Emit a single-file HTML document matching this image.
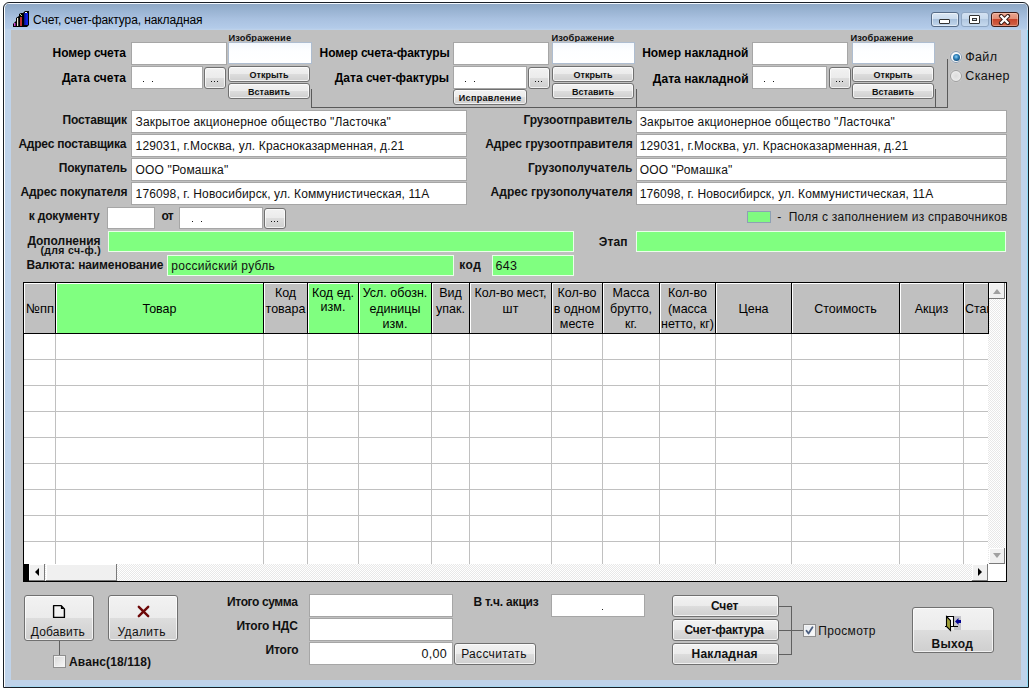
<!DOCTYPE html>
<html><head><meta charset="utf-8"><style>
html,body{margin:0;padding:0;width:1033px;height:690px;overflow:hidden;background:#fff;}
#root{position:relative;width:1033px;height:690px;overflow:hidden;font-family:"Liberation Sans", sans-serif;}
.a{position:absolute;}
.t{position:absolute;white-space:nowrap;font-family:"Liberation Sans", sans-serif;}
</style></head><body><div id="root">
<div class="a" style="left:3px;top:2px;width:1026px;height:686px;box-sizing:border-box;border:1px solid #1a1f26;border-radius:6px 6px 0 0;background:linear-gradient(#f4f9ff 0px,#f4f9ff 1px,#90a9c6 1px,#9ab4d3 8px,#a9c1e0 16px,#b3cbe9 25px,#bfd3ea 27px,#bfd3ea 100%);box-shadow:inset 1px 0 0 #fff, inset -1px 0 0 rgba(255,255,255,0.5);"></div>
<div class="a" style="left:1027px;top:30px;width:1px;height:657px;background:#8fdcf5;"></div>
<div class="a" style="left:11px;top:686px;width:1016px;height:1px;background:#a6d8f0;"></div>
<div class="a" style="left:11px;top:30px;width:1010px;height:650px;background:#c0c0c0;"></div>
<svg class="a" style="left:12px;top:10px" width="18" height="18" viewBox="0 0 18 18"><path d="M11 3 L13 1 L17 1 L17 15 L15 17 L11 17 Z" fill="#000"/><rect x="12" y="3" width="4" height="12" fill="#1020e0"/><rect x="12" y="3" width="1.5" height="12" fill="#0a1490"/><rect x="13" y="2" width="2" height="1" fill="#fff"/><path d="M7 4 L9 3 L11 3 L11 17 L7 17 Z" fill="#000"/><rect x="8" y="7" width="2" height="9" fill="#c03030"/><rect x="8" y="4" width="1" height="1" fill="#c8e890"/><rect x="9" y="5" width="1" height="1" fill="#c8e890"/><path d="M4 8 L7 6 L7 17 L4 17 Z" fill="#000"/><rect x="5" y="8" width="1.2" height="8" fill="#f0e8d8"/><path d="M1 14 L4 11 L4 17 L1 17 Z" fill="#000"/><rect x="2" y="13" width="1.5" height="3" fill="#d040d0"/></svg>
<div class="t" style="top:13px;font-size:12px;line-height:14px;font-weight:normal;color:#000;letter-spacing:-0.107px;left:33.10px;">Счет, счет-фактура, накладная</div>
<div class="a" style="left:931px;top:12px;width:28px;height:15px;box-sizing:border-box;border:1px solid #566b86;border-radius:3px;background:linear-gradient(#dbe7f4 0%,#c9daed 50%,#a9c1dc 50%,#c3d7ec 100%);box-shadow:inset 0 0 0 1px rgba(255,255,255,0.5);"></div>
<div class="a" style="left:939px;top:19px;width:11px;height:5px;box-sizing:border-box;border:1px solid #333;border-radius:1px;background:#fff;"></div>
<div class="a" style="left:961px;top:12px;width:28px;height:15px;box-sizing:border-box;border:1px solid #8fa6c2;border-radius:3px;background:linear-gradient(#d4e2f2 0%,#c5d8ec 50%,#b2c8e1 50%,#c6d9ee 100%);"></div>
<div class="a" style="left:969px;top:15px;width:11px;height:9px;box-sizing:border-box;border:1px solid #333;border-radius:1px;background:#fff;"></div>
<div class="a" style="left:972px;top:18px;width:5px;height:3px;box-sizing:border-box;border:1px solid #333;background:#c8d8ea;"></div>
<div class="a" style="left:991px;top:12px;width:28px;height:15px;box-sizing:border-box;border:1px solid #3b1b17;border-radius:3px;background:linear-gradient(#eaa591 0%,#e08b72 50%,#c9452b 50%,#d0644a 100%);box-shadow:inset 0 0 0 1px rgba(255,220,200,0.4);"></div>
<svg class="a" style="left:998px;top:14px" width="13" height="11" viewBox="0 0 13 11"><path d="M3 2 L10 9 M10 2 L3 9" stroke="#3a1a14" stroke-width="4.2" stroke-linecap="round"/><path d="M3.3 2.3 L9.7 8.7 M9.7 2.3 L3.3 8.7" stroke="#fff" stroke-width="2.3" stroke-linecap="square"/></svg>
<div class="a" style="left:131px;top:42px;width:96px;height:23px;background:#fff;border:1px solid #a6a6a6;box-sizing:border-box;"></div>
<div class="a" style="left:131px;top:66px;width:72px;height:23px;background:#fff;border:1px solid #a6a6a6;box-sizing:border-box;"></div>
<div class="a" style="left:142.75px;top:80.75px;width:1.5px;height:1.5px;background:#000;border-radius:0.3px;"></div>
<div class="a" style="left:151.75px;top:80.75px;width:1.5px;height:1.5px;background:#000;border-radius:0.3px;"></div>
<div class="a" style="left:204px;top:67px;width:22px;height:22px;box-sizing:border-box;border:1px solid #707070;border-radius:3px;background:linear-gradient(#f2f2f2 0%,#ebebeb 50%,#dddddd 50%,#cfcfcf 100%);box-shadow:inset 0 0 0 1px rgba(255,255,255,0.7);"></div>
<div class="a" style="left:210.75px;top:80.75px;width:1.5px;height:1.5px;background:#000;border-radius:0.3px;"></div>
<div class="a" style="left:213.75px;top:80.75px;width:1.5px;height:1.5px;background:#000;border-radius:0.3px;"></div>
<div class="a" style="left:216.75px;top:80.75px;width:1.5px;height:1.5px;background:#000;border-radius:0.3px;"></div>
<div class="t" style="top:33px;font-size:9.3px;line-height:10px;font-weight:bold;color:#111;letter-spacing:0.120px;left:228.40px;">Изображение</div>
<div class="a" style="left:228px;top:42px;width:84px;height:22px;background:linear-gradient(#f4f8fd,#fdfeff 40%,#ffffff);border:1px solid #aebdd0;box-sizing:border-box;"></div>
<div class="a" style="left:228px;top:66px;width:82px;height:16px;box-sizing:border-box;border:1px solid #707070;border-radius:3px;background:linear-gradient(#f2f2f2 0%,#ebebeb 50%,#dddddd 50%,#cfcfcf 100%);box-shadow:inset 0 0 0 1px rgba(255,255,255,0.7);"></div>
<div class="t" style="top:70px;font-size:9px;line-height:10px;font-weight:bold;color:#111;left:228px;width:82px;text-align:center;">Открыть</div>
<div class="a" style="left:228px;top:83px;width:82px;height:16px;box-sizing:border-box;border:1px solid #707070;border-radius:3px;background:linear-gradient(#f2f2f2 0%,#ebebeb 50%,#dddddd 50%,#cfcfcf 100%);box-shadow:inset 0 0 0 1px rgba(255,255,255,0.7);"></div>
<div class="t" style="top:87px;font-size:9px;line-height:10px;font-weight:bold;color:#111;left:228px;width:82px;text-align:center;">Вставить</div>
<div class="a" style="left:453px;top:42px;width:96px;height:23px;background:#fff;border:1px solid #a6a6a6;box-sizing:border-box;"></div>
<div class="a" style="left:453px;top:66px;width:74px;height:23px;background:#fff;border:1px solid #a6a6a6;box-sizing:border-box;"></div>
<div class="a" style="left:464.75px;top:80.75px;width:1.5px;height:1.5px;background:#000;border-radius:0.3px;"></div>
<div class="a" style="left:473.75px;top:80.75px;width:1.5px;height:1.5px;background:#000;border-radius:0.3px;"></div>
<div class="a" style="left:528px;top:67px;width:22px;height:22px;box-sizing:border-box;border:1px solid #707070;border-radius:3px;background:linear-gradient(#f2f2f2 0%,#ebebeb 50%,#dddddd 50%,#cfcfcf 100%);box-shadow:inset 0 0 0 1px rgba(255,255,255,0.7);"></div>
<div class="a" style="left:534.75px;top:80.75px;width:1.5px;height:1.5px;background:#000;border-radius:0.3px;"></div>
<div class="a" style="left:537.75px;top:80.75px;width:1.5px;height:1.5px;background:#000;border-radius:0.3px;"></div>
<div class="a" style="left:540.75px;top:80.75px;width:1.5px;height:1.5px;background:#000;border-radius:0.3px;"></div>
<div class="t" style="top:33px;font-size:9.3px;line-height:10px;font-weight:bold;color:#111;letter-spacing:0.120px;left:551.50px;">Изображение</div>
<div class="a" style="left:552px;top:42px;width:83px;height:22px;background:linear-gradient(#f4f8fd,#fdfeff 40%,#ffffff);border:1px solid #aebdd0;box-sizing:border-box;"></div>
<div class="a" style="left:552px;top:66px;width:82px;height:16px;box-sizing:border-box;border:1px solid #707070;border-radius:3px;background:linear-gradient(#f2f2f2 0%,#ebebeb 50%,#dddddd 50%,#cfcfcf 100%);box-shadow:inset 0 0 0 1px rgba(255,255,255,0.7);"></div>
<div class="t" style="top:70px;font-size:9px;line-height:10px;font-weight:bold;color:#111;left:552px;width:82px;text-align:center;">Открыть</div>
<div class="a" style="left:552px;top:83px;width:82px;height:16px;box-sizing:border-box;border:1px solid #707070;border-radius:3px;background:linear-gradient(#f2f2f2 0%,#ebebeb 50%,#dddddd 50%,#cfcfcf 100%);box-shadow:inset 0 0 0 1px rgba(255,255,255,0.7);"></div>
<div class="t" style="top:87px;font-size:9px;line-height:10px;font-weight:bold;color:#111;left:552px;width:82px;text-align:center;">Вставить</div>
<div class="a" style="left:752px;top:42px;width:96px;height:23px;background:#fff;border:1px solid #a6a6a6;box-sizing:border-box;"></div>
<div class="a" style="left:752px;top:66px;width:75px;height:23px;background:#fff;border:1px solid #a6a6a6;box-sizing:border-box;"></div>
<div class="a" style="left:763.75px;top:80.75px;width:1.5px;height:1.5px;background:#000;border-radius:0.3px;"></div>
<div class="a" style="left:772.75px;top:80.75px;width:1.5px;height:1.5px;background:#000;border-radius:0.3px;"></div>
<div class="a" style="left:829px;top:67px;width:22px;height:22px;box-sizing:border-box;border:1px solid #707070;border-radius:3px;background:linear-gradient(#f2f2f2 0%,#ebebeb 50%,#dddddd 50%,#cfcfcf 100%);box-shadow:inset 0 0 0 1px rgba(255,255,255,0.7);"></div>
<div class="a" style="left:835.75px;top:80.75px;width:1.5px;height:1.5px;background:#000;border-radius:0.3px;"></div>
<div class="a" style="left:838.75px;top:80.75px;width:1.5px;height:1.5px;background:#000;border-radius:0.3px;"></div>
<div class="a" style="left:841.75px;top:80.75px;width:1.5px;height:1.5px;background:#000;border-radius:0.3px;"></div>
<div class="t" style="top:33px;font-size:9.3px;line-height:10px;font-weight:bold;color:#111;letter-spacing:0.120px;left:850.50px;">Изображение</div>
<div class="a" style="left:852px;top:42px;width:83px;height:22px;background:linear-gradient(#f4f8fd,#fdfeff 40%,#ffffff);border:1px solid #aebdd0;box-sizing:border-box;"></div>
<div class="a" style="left:852px;top:66px;width:82px;height:16px;box-sizing:border-box;border:1px solid #707070;border-radius:3px;background:linear-gradient(#f2f2f2 0%,#ebebeb 50%,#dddddd 50%,#cfcfcf 100%);box-shadow:inset 0 0 0 1px rgba(255,255,255,0.7);"></div>
<div class="t" style="top:70px;font-size:9px;line-height:10px;font-weight:bold;color:#111;left:852px;width:82px;text-align:center;">Открыть</div>
<div class="a" style="left:852px;top:83px;width:82px;height:16px;box-sizing:border-box;border:1px solid #707070;border-radius:3px;background:linear-gradient(#f2f2f2 0%,#ebebeb 50%,#dddddd 50%,#cfcfcf 100%);box-shadow:inset 0 0 0 1px rgba(255,255,255,0.7);"></div>
<div class="t" style="top:87px;font-size:9px;line-height:10px;font-weight:bold;color:#111;left:852px;width:82px;text-align:center;">Вставить</div>
<div class="t" style="top:46px;font-size:12px;line-height:14px;font-weight:bold;color:#000;letter-spacing:-0.110px;left:52.60px;">Номер счета</div>
<div class="t" style="top:71px;font-size:12px;line-height:14px;font-weight:bold;color:#000;letter-spacing:0.056px;left:62.00px;">Дата счета</div>
<div class="t" style="top:46px;font-size:12px;line-height:14px;font-weight:bold;color:#000;letter-spacing:-0.100px;left:319.60px;">Номер счета-фактуры</div>
<div class="t" style="top:71px;font-size:12px;line-height:14px;font-weight:bold;color:#000;letter-spacing:-0.000px;left:334.80px;">Дата счет-фактуры</div>
<div class="t" style="top:46px;font-size:12px;line-height:14px;font-weight:bold;color:#000;letter-spacing:0.021px;left:642.20px;">Номер накладной</div>
<div class="t" style="top:72px;font-size:12px;line-height:14px;font-weight:bold;color:#000;letter-spacing:0.054px;left:652.80px;">Дата накладной</div>
<div class="a" style="left:453px;top:89px;width:74px;height:16px;box-sizing:border-box;border:1px solid #707070;border-radius:3px;background:linear-gradient(#f2f2f2 0%,#ebebeb 50%,#dddddd 50%,#cfcfcf 100%);box-shadow:inset 0 0 0 1px rgba(255,255,255,0.7);"></div>
<div class="t" style="top:93px;font-size:9px;line-height:10px;font-weight:bold;color:#111;letter-spacing:0.310px;left:458.80px;">Исправление</div>
<div class="a" style="left:311px;top:89px;width:1px;height:18px;background:#5a5a5a;"></div>
<div class="a" style="left:636px;top:89px;width:1px;height:18px;background:#5a5a5a;"></div>
<div class="a" style="left:935px;top:89px;width:1px;height:18px;background:#5a5a5a;"></div>
<div class="a" style="left:311px;top:107px;width:637px;height:1px;background:#5a5a5a;"></div>
<div class="a" style="left:947px;top:59px;width:1px;height:49px;background:#5a5a5a;"></div>
<div class="a" style="left:950px;top:51px;width:12px;height:12px;box-sizing:border-box;border-radius:50%;border:1px solid #8496aa;background:#f6f8fa;box-shadow:0 0 1px rgba(255,255,255,0.8);"></div>
<div class="a" style="left:952.5px;top:53.5px;width:7px;height:7px;border-radius:50%;background:radial-gradient(circle at 45% 40%, #8fd0f8 0%, #2b7fb8 40%, #0f4470 80%, #1a3a5a 100%);"></div>
<div class="a" style="left:950px;top:70px;width:12px;height:12px;box-sizing:border-box;border-radius:50%;border:1px solid #a0a0a0;background:radial-gradient(circle at 50% 50%, #dcdcdc 0%, #e6e6e6 50%, #fafafa 100%);box-shadow:0 0 1px rgba(255,255,255,0.8);"></div>
<div class="t" style="top:50px;font-size:12.5px;line-height:14px;font-weight:normal;color:#111;letter-spacing:0.300px;left:965.30px;">Файл</div>
<div class="t" style="top:69px;font-size:12.5px;line-height:14px;font-weight:normal;color:#111;letter-spacing:0.340px;left:965.30px;">Сканер</div>
<div class="a" style="left:131px;top:110px;width:336px;height:23px;background:#fff;border:1px solid #a6a6a6;box-sizing:border-box;"></div>
<div class="a" style="left:636px;top:110px;width:371px;height:23px;background:#fff;border:1px solid #a6a6a6;box-sizing:border-box;"></div>
<div class="t" style="top:113px;font-size:12px;line-height:14px;font-weight:bold;color:#111;letter-spacing:-0.188px;left:62.60px;">Поставщик</div>
<div class="t" style="top:113px;font-size:12px;line-height:14px;font-weight:bold;color:#111;letter-spacing:-0.040px;left:523.40px;">Грузоотправитель</div>
<div class="t" style="top:115px;font-size:12px;line-height:14px;font-weight:normal;color:#111;letter-spacing:0.159px;left:135.60px;">Закрытое акционерное общество "Ласточка"</div>
<div class="t" style="top:115px;font-size:12px;line-height:14px;font-weight:normal;color:#111;letter-spacing:0.156px;left:639.70px;">Закрытое акционерное общество "Ласточка"</div>
<div class="a" style="left:131px;top:134px;width:336px;height:23px;background:#fff;border:1px solid #a6a6a6;box-sizing:border-box;"></div>
<div class="a" style="left:636px;top:134px;width:371px;height:23px;background:#fff;border:1px solid #a6a6a6;box-sizing:border-box;"></div>
<div class="t" style="top:137px;font-size:12px;line-height:14px;font-weight:bold;color:#111;letter-spacing:-0.220px;left:18.40px;">Адрес поставщика</div>
<div class="t" style="top:137px;font-size:12px;line-height:14px;font-weight:bold;color:#111;letter-spacing:-0.019px;left:485.20px;">Адрес грузоотправителя</div>
<div class="t" style="top:139px;font-size:12px;line-height:14px;font-weight:normal;color:#111;letter-spacing:0.145px;left:135.60px;">129031, г.Москва, ул. Красноказарменная, д.21</div>
<div class="t" style="top:139px;font-size:12px;line-height:14px;font-weight:normal;color:#111;letter-spacing:0.143px;left:639.70px;">129031, г.Москва, ул. Красноказарменная, д.21</div>
<div class="a" style="left:131px;top:158px;width:336px;height:23px;background:#fff;border:1px solid #a6a6a6;box-sizing:border-box;"></div>
<div class="a" style="left:636px;top:158px;width:371px;height:23px;background:#fff;border:1px solid #a6a6a6;box-sizing:border-box;"></div>
<div class="t" style="top:161px;font-size:12px;line-height:14px;font-weight:bold;color:#111;letter-spacing:-0.178px;left:58.70px;">Покупатель</div>
<div class="t" style="top:161px;font-size:12px;line-height:14px;font-weight:bold;color:#111;letter-spacing:0.129px;left:528.00px;">Грузополучатель</div>
<div class="t" style="top:163px;font-size:12px;line-height:14px;font-weight:normal;color:#111;letter-spacing:0.150px;left:135.60px;">ООО "Ромашка"</div>
<div class="t" style="top:163px;font-size:12px;line-height:14px;font-weight:normal;color:#111;letter-spacing:0.150px;left:639.70px;">ООО "Ромашка"</div>
<div class="a" style="left:131px;top:182px;width:336px;height:23px;background:#fff;border:1px solid #a6a6a6;box-sizing:border-box;"></div>
<div class="a" style="left:636px;top:182px;width:371px;height:23px;background:#fff;border:1px solid #a6a6a6;box-sizing:border-box;"></div>
<div class="t" style="top:185px;font-size:12px;line-height:14px;font-weight:bold;color:#111;letter-spacing:-0.093px;left:20.50px;">Адрес покупателя</div>
<div class="t" style="top:185px;font-size:12px;line-height:14px;font-weight:bold;color:#111;letter-spacing:0.065px;left:490.50px;">Адрес грузополучателя</div>
<div class="t" style="top:187px;font-size:12px;line-height:14px;font-weight:normal;color:#111;letter-spacing:0.129px;left:135.60px;">176098, г. Новосибирск, ул. Коммунистическая, 11А</div>
<div class="t" style="top:187px;font-size:12px;line-height:14px;font-weight:normal;color:#111;letter-spacing:0.127px;left:639.70px;">176098, г. Новосибирск, ул. Коммунистическая, 11А</div>
<div class="t" style="top:209px;font-size:12px;line-height:14px;font-weight:bold;color:#111;letter-spacing:-0.150px;left:28.70px;">к документу</div>
<div class="a" style="left:107px;top:207px;width:48px;height:22px;background:#fff;border:1px solid #a6a6a6;box-sizing:border-box;"></div>
<div class="t" style="top:209px;font-size:12px;line-height:14px;font-weight:bold;color:#111;letter-spacing:-0.800px;left:161.60px;">от</div>
<div class="a" style="left:179px;top:207px;width:84px;height:22px;background:#fff;border:1px solid #a6a6a6;box-sizing:border-box;"></div>
<div class="a" style="left:191.75px;top:220.75px;width:1.5px;height:1.5px;background:#000;border-radius:0.3px;"></div>
<div class="a" style="left:200.75px;top:220.75px;width:1.5px;height:1.5px;background:#000;border-radius:0.3px;"></div>
<div class="a" style="left:264px;top:208px;width:22px;height:21px;box-sizing:border-box;border:1px solid #707070;border-radius:3px;background:linear-gradient(#f2f2f2 0%,#ebebeb 50%,#dddddd 50%,#cfcfcf 100%);box-shadow:inset 0 0 0 1px rgba(255,255,255,0.7);"></div>
<div class="a" style="left:270.75px;top:220.75px;width:1.5px;height:1.5px;background:#000;border-radius:0.3px;"></div>
<div class="a" style="left:273.75px;top:220.75px;width:1.5px;height:1.5px;background:#000;border-radius:0.3px;"></div>
<div class="a" style="left:276.75px;top:220.75px;width:1.5px;height:1.5px;background:#000;border-radius:0.3px;"></div>
<div class="a" style="left:747px;top:211px;width:24px;height:12px;box-sizing:border-box;border:1px solid #8ea0b4;background:#80fa80;"></div>
<div class="t" style="top:210px;font-size:12px;line-height:14px;font-weight:normal;color:#111;letter-spacing:0.256px;left:777.30px;">-&nbsp;&nbsp;Поля с заполнением из справочников</div>
<div class="t" style="top:234px;font-size:12px;line-height:14px;font-weight:bold;color:#111;letter-spacing:-0.033px;left:27.40px;">Дополнения</div>
<div class="t" style="top:244px;font-size:10.5px;line-height:12px;font-weight:bold;color:#111;letter-spacing:0.370px;left:40.40px;">(для сч-ф.)</div>
<div class="a" style="left:108px;top:231px;width:466px;height:21px;background:#80ff80;border:1px solid #eaffea;box-sizing:border-box;"></div>
<div class="t" style="top:235px;font-size:12px;line-height:14px;font-weight:bold;color:#111;letter-spacing:0.167px;left:598.70px;">Этап</div>
<div class="a" style="left:636px;top:231px;width:370px;height:21px;background:#80ff80;border:1px solid #eaffea;box-sizing:border-box;"></div>
<div class="t" style="top:258px;font-size:12px;line-height:14px;font-weight:bold;color:#111;letter-spacing:-0.126px;left:26.40px;">Валюта: наименование</div>
<div class="a" style="left:167px;top:255px;width:287px;height:21px;background:#80ff80;border:1px solid #eaffea;box-sizing:border-box;"></div>
<div class="t" style="top:259px;font-size:12px;line-height:14px;font-weight:normal;color:#111;letter-spacing:0.300px;left:171.30px;">российский рубль</div>
<div class="t" style="top:258px;font-size:12px;line-height:14px;font-weight:bold;color:#111;letter-spacing:0.550px;left:459.20px;">код</div>
<div class="a" style="left:492px;top:255px;width:82px;height:21px;background:#80ff80;border:1px solid #eaffea;box-sizing:border-box;"></div>
<div class="t" style="top:259px;font-size:12.5px;line-height:14px;font-weight:normal;color:#111;letter-spacing:0.300px;left:495.40px;">643</div>
<div class="a" style="left:23px;top:282px;width:984px;height:300px;background:#fff;box-sizing:border-box;border:1px solid #000;"></div>
<div class="a" style="left:24px;top:283px;width:31px;height:50px;background:#c0c0c0;box-shadow:inset 1px 1px 0 #fff;"></div>
<div class="a" style="left:56px;top:283px;width:207px;height:50px;background:#80ff80;box-shadow:inset 1px 1px 0 #fff;"></div>
<div class="a" style="left:264px;top:283px;width:43px;height:50px;background:#c0c0c0;box-shadow:inset 1px 1px 0 #fff;"></div>
<div class="a" style="left:308px;top:283px;width:50px;height:50px;background:#80ff80;box-shadow:inset 1px 1px 0 #fff;"></div>
<div class="a" style="left:359px;top:283px;width:72px;height:50px;background:#80ff80;box-shadow:inset 1px 1px 0 #fff;"></div>
<div class="a" style="left:432px;top:283px;width:37px;height:50px;background:#c0c0c0;box-shadow:inset 1px 1px 0 #fff;"></div>
<div class="a" style="left:470px;top:283px;width:81px;height:50px;background:#c0c0c0;box-shadow:inset 1px 1px 0 #fff;"></div>
<div class="a" style="left:552px;top:283px;width:50px;height:50px;background:#c0c0c0;box-shadow:inset 1px 1px 0 #fff;"></div>
<div class="a" style="left:603px;top:283px;width:56px;height:50px;background:#c0c0c0;box-shadow:inset 1px 1px 0 #fff;"></div>
<div class="a" style="left:660px;top:283px;width:55px;height:50px;background:#c0c0c0;box-shadow:inset 1px 1px 0 #fff;"></div>
<div class="a" style="left:716px;top:283px;width:75px;height:50px;background:#c0c0c0;box-shadow:inset 1px 1px 0 #fff;"></div>
<div class="a" style="left:792px;top:283px;width:107px;height:50px;background:#c0c0c0;box-shadow:inset 1px 1px 0 #fff;"></div>
<div class="a" style="left:900px;top:283px;width:63px;height:50px;background:#c0c0c0;box-shadow:inset 1px 1px 0 #fff;"></div>
<div class="a" style="left:964px;top:283px;width:24px;height:50px;background:#c0c0c0;box-shadow:inset 1px 1px 0 #fff;"></div>
<div class="a" style="left:55px;top:283px;width:1px;height:50px;background:#000;"></div>
<div class="a" style="left:263px;top:283px;width:1px;height:50px;background:#000;"></div>
<div class="a" style="left:307px;top:283px;width:1px;height:50px;background:#000;"></div>
<div class="a" style="left:358px;top:283px;width:1px;height:50px;background:#000;"></div>
<div class="a" style="left:431px;top:283px;width:1px;height:50px;background:#000;"></div>
<div class="a" style="left:469px;top:283px;width:1px;height:50px;background:#000;"></div>
<div class="a" style="left:551px;top:283px;width:1px;height:50px;background:#000;"></div>
<div class="a" style="left:602px;top:283px;width:1px;height:50px;background:#000;"></div>
<div class="a" style="left:659px;top:283px;width:1px;height:50px;background:#000;"></div>
<div class="a" style="left:715px;top:283px;width:1px;height:50px;background:#000;"></div>
<div class="a" style="left:791px;top:283px;width:1px;height:50px;background:#000;"></div>
<div class="a" style="left:899px;top:283px;width:1px;height:50px;background:#000;"></div>
<div class="a" style="left:963px;top:283px;width:1px;height:50px;background:#000;"></div>
<div class="a" style="left:988px;top:283px;width:1px;height:50px;background:#000;"></div>
<div class="a" style="left:24px;top:333px;width:965px;height:1px;background:#000;"></div>
<div class="a" style="left:55px;top:334px;width:1px;height:230px;background:#c0c0c0;"></div>
<div class="a" style="left:263px;top:334px;width:1px;height:230px;background:#c0c0c0;"></div>
<div class="a" style="left:307px;top:334px;width:1px;height:230px;background:#c0c0c0;"></div>
<div class="a" style="left:358px;top:334px;width:1px;height:230px;background:#c0c0c0;"></div>
<div class="a" style="left:431px;top:334px;width:1px;height:230px;background:#c0c0c0;"></div>
<div class="a" style="left:469px;top:334px;width:1px;height:230px;background:#c0c0c0;"></div>
<div class="a" style="left:551px;top:334px;width:1px;height:230px;background:#c0c0c0;"></div>
<div class="a" style="left:602px;top:334px;width:1px;height:230px;background:#c0c0c0;"></div>
<div class="a" style="left:659px;top:334px;width:1px;height:230px;background:#c0c0c0;"></div>
<div class="a" style="left:715px;top:334px;width:1px;height:230px;background:#c0c0c0;"></div>
<div class="a" style="left:791px;top:334px;width:1px;height:230px;background:#c0c0c0;"></div>
<div class="a" style="left:899px;top:334px;width:1px;height:230px;background:#c0c0c0;"></div>
<div class="a" style="left:963px;top:334px;width:1px;height:230px;background:#c0c0c0;"></div>
<div class="a" style="left:24px;top:359px;width:964px;height:1px;background:#c0c0c0;"></div>
<div class="a" style="left:24px;top:385px;width:964px;height:1px;background:#c0c0c0;"></div>
<div class="a" style="left:24px;top:411px;width:964px;height:1px;background:#c0c0c0;"></div>
<div class="a" style="left:24px;top:437px;width:964px;height:1px;background:#c0c0c0;"></div>
<div class="a" style="left:24px;top:463px;width:964px;height:1px;background:#c0c0c0;"></div>
<div class="a" style="left:24px;top:489px;width:964px;height:1px;background:#c0c0c0;"></div>
<div class="a" style="left:24px;top:515px;width:964px;height:1px;background:#c0c0c0;"></div>
<div class="a" style="left:24px;top:541px;width:964px;height:1px;background:#c0c0c0;"></div>
<div class="t" style="top:301px;font-size:13.5px;line-height:15px;font-weight:normal;color:#000;left:25.60px;transform:scaleX(0.96);transform-origin:left 0;">№пп</div>
<div class="t" style="top:301px;font-size:13.5px;line-height:15px;font-weight:normal;color:#000;left:36px;width:247px;text-align:center;transform:scaleX(0.925);transform-origin:center 0;white-space:nowrap;">Товар</div>
<div class="t" style="top:285px;font-size:13.5px;line-height:15px;font-weight:normal;color:#000;left:244px;width:83px;text-align:center;transform:scaleX(0.925);transform-origin:center 0;white-space:nowrap;">Код</div>
<div class="t" style="top:301px;font-size:13.5px;line-height:15px;font-weight:normal;color:#000;left:244px;width:83px;text-align:center;transform:scaleX(0.925);transform-origin:center 0;white-space:nowrap;">товара</div>
<div class="t" style="top:285px;font-size:13.5px;line-height:15px;font-weight:normal;color:#000;left:288px;width:90px;text-align:center;transform:scaleX(0.925);transform-origin:center 0;white-space:nowrap;">Код ед.</div>
<div class="t" style="top:299px;font-size:13.5px;line-height:15px;font-weight:normal;color:#000;left:288px;width:90px;text-align:center;transform:scaleX(0.925);transform-origin:center 0;white-space:nowrap;">изм.</div>
<div class="t" style="top:285px;font-size:13.5px;line-height:15px;font-weight:normal;color:#000;left:339px;width:112px;text-align:center;transform:scaleX(0.925);transform-origin:center 0;white-space:nowrap;">Усл. обозн.</div>
<div class="t" style="top:301px;font-size:13.5px;line-height:15px;font-weight:normal;color:#000;left:339px;width:112px;text-align:center;transform:scaleX(0.925);transform-origin:center 0;white-space:nowrap;">единицы</div>
<div class="t" style="top:316px;font-size:13.5px;line-height:15px;font-weight:normal;color:#000;left:339px;width:112px;text-align:center;transform:scaleX(0.925);transform-origin:center 0;white-space:nowrap;">изм.</div>
<div class="t" style="top:285px;font-size:13.5px;line-height:15px;font-weight:normal;color:#000;left:412px;width:77px;text-align:center;transform:scaleX(0.925);transform-origin:center 0;white-space:nowrap;">Вид</div>
<div class="t" style="top:301px;font-size:13.5px;line-height:15px;font-weight:normal;color:#000;left:412px;width:77px;text-align:center;transform:scaleX(0.925);transform-origin:center 0;white-space:nowrap;">упак.</div>
<div class="t" style="top:285px;font-size:13.5px;line-height:15px;font-weight:normal;color:#000;left:450px;width:121px;text-align:center;transform:scaleX(0.925);transform-origin:center 0;white-space:nowrap;">Кол-во мест,</div>
<div class="t" style="top:301px;font-size:13.5px;line-height:15px;font-weight:normal;color:#000;left:450px;width:121px;text-align:center;transform:scaleX(0.925);transform-origin:center 0;white-space:nowrap;">шт</div>
<div class="t" style="top:285px;font-size:13.5px;line-height:15px;font-weight:normal;color:#000;left:532px;width:90px;text-align:center;transform:scaleX(0.925);transform-origin:center 0;white-space:nowrap;">Кол-во</div>
<div class="t" style="top:301px;font-size:13.5px;line-height:15px;font-weight:normal;color:#000;left:532px;width:90px;text-align:center;transform:scaleX(0.925);transform-origin:center 0;white-space:nowrap;">в одном</div>
<div class="t" style="top:316px;font-size:13.5px;line-height:15px;font-weight:normal;color:#000;left:532px;width:90px;text-align:center;transform:scaleX(0.925);transform-origin:center 0;white-space:nowrap;">месте</div>
<div class="t" style="top:285px;font-size:13.5px;line-height:15px;font-weight:normal;color:#000;left:583px;width:96px;text-align:center;transform:scaleX(0.925);transform-origin:center 0;white-space:nowrap;">Масса</div>
<div class="t" style="top:301px;font-size:13.5px;line-height:15px;font-weight:normal;color:#000;left:583px;width:96px;text-align:center;transform:scaleX(0.925);transform-origin:center 0;white-space:nowrap;">брутто,</div>
<div class="t" style="top:316px;font-size:13.5px;line-height:15px;font-weight:normal;color:#000;left:583px;width:96px;text-align:center;transform:scaleX(0.925);transform-origin:center 0;white-space:nowrap;">кг.</div>
<div class="t" style="top:285px;font-size:13.5px;line-height:15px;font-weight:normal;color:#000;left:640px;width:95px;text-align:center;transform:scaleX(0.925);transform-origin:center 0;white-space:nowrap;">Кол-во</div>
<div class="t" style="top:301px;font-size:13.5px;line-height:15px;font-weight:normal;color:#000;left:640px;width:95px;text-align:center;transform:scaleX(0.925);transform-origin:center 0;white-space:nowrap;">(масса</div>
<div class="t" style="top:316px;font-size:13.5px;line-height:15px;font-weight:normal;color:#000;left:640px;width:95px;text-align:center;transform:scaleX(0.925);transform-origin:center 0;white-space:nowrap;">нетто, кг)</div>
<div class="t" style="top:301px;font-size:13.5px;line-height:15px;font-weight:normal;color:#000;left:696px;width:115px;text-align:center;transform:scaleX(0.925);transform-origin:center 0;white-space:nowrap;">Цена</div>
<div class="t" style="top:301px;font-size:13.5px;line-height:15px;font-weight:normal;color:#000;left:772px;width:147px;text-align:center;transform:scaleX(0.925);transform-origin:center 0;white-space:nowrap;">Стоимость</div>
<div class="t" style="top:301px;font-size:13.5px;line-height:15px;font-weight:normal;color:#000;left:880px;width:103px;text-align:center;transform:scaleX(0.925);transform-origin:center 0;white-space:nowrap;">Акциз</div>
<div class="a" style="left:964px;top:283px;width:24px;height:50px;overflow:hidden;">
<div class="t" style="top:18px;font-size:13.5px;line-height:15px;font-weight:normal;color:#000;left:0.50px;transform:scaleX(0.925);transform-origin:left 0;">Ставка</div>
</div>
<div class="a" style="left:988px;top:283px;width:17px;height:281px;background-color:#fff;background-image:linear-gradient(45deg,#e8e8e8 25%,transparent 25%,transparent 75%,#e8e8e8 75%),linear-gradient(45deg,#e8e8e8 25%,transparent 25%,transparent 75%,#e8e8e8 75%);background-size:2px 2px;background-position:0 0,1px 1px;"></div>
<div class="a" style="left:988px;top:283px;width:1px;height:51px;background:#000;"></div>
<div class="a" style="left:989px;top:283px;width:16px;height:16px;box-sizing:border-box;background:#f0f0f0;border-right:1px solid #7a7a7a;border-bottom:1px solid #7a7a7a;box-shadow:inset 1px 1px 0 #fff;"></div>
<svg class="a" style="left:989px;top:283px" width="16" height="16"><path d="M4 11 L12 11 L8 6 Z" fill="#a0a0a0"/></svg>
<div class="a" style="left:989px;top:548px;width:16px;height:16px;box-sizing:border-box;background:#f0f0f0;border-right:1px solid #7a7a7a;border-bottom:1px solid #7a7a7a;box-shadow:inset 1px 1px 0 #fff;"></div>
<svg class="a" style="left:989px;top:548px" width="16" height="16"><path d="M4 5 L12 5 L8 10 Z" fill="#a0a0a0"/></svg>
<div class="a" style="left:24px;top:564px;width:964px;height:17px;background-color:#fff;background-image:linear-gradient(45deg,#e8e8e8 25%,transparent 25%,transparent 75%,#e8e8e8 75%),linear-gradient(45deg,#e8e8e8 25%,transparent 25%,transparent 75%,#e8e8e8 75%);background-size:2px 2px;background-position:0 0,1px 1px;"></div>
<div class="a" style="left:24px;top:564px;width:5px;height:17px;background:#000;"></div>
<div class="a" style="left:29px;top:564px;width:16px;height:17px;box-sizing:border-box;background:#f0f0f0;border-right:1px solid #7a7a7a;border-bottom:1px solid #7a7a7a;box-shadow:inset 1px 1px 0 #fff;"></div>
<svg class="a" style="left:29px;top:564px" width="16" height="17"><path d="M10 4 L10 12 L6 8 Z" fill="#000"/></svg>
<div class="a" style="left:46px;top:564px;width:71px;height:17px;box-sizing:border-box;background:#f0f0f0;border-right:1px solid #7a7a7a;border-bottom:1px solid #7a7a7a;box-shadow:inset 1px 1px 0 #fff;"></div>
<div class="a" style="left:972px;top:564px;width:16px;height:17px;box-sizing:border-box;background:#f0f0f0;border-right:1px solid #7a7a7a;border-bottom:1px solid #7a7a7a;box-shadow:inset 1px 1px 0 #fff;"></div>
<svg class="a" style="left:972px;top:564px" width="16" height="17"><path d="M6 4 L6 12 L10 8 Z" fill="#000"/></svg>
<div class="a" style="left:988px;top:564px;width:17px;height:17px;background:#fff;"></div>
<div class="a" style="left:24px;top:595px;width:70px;height:46px;box-sizing:border-box;border:1px solid #707070;border-radius:3px;background:linear-gradient(#f2f2f2 0%,#ebebeb 50%,#dddddd 50%,#cfcfcf 100%);box-shadow:inset 0 0 0 1px rgba(255,255,255,0.7);"></div>
<svg class="a" style="left:52px;top:604px" width="14" height="15" viewBox="0 0 14 15"><path d="M1.6 1.6 L9 1.6 L12.4 5 L12.4 13.4 L1.6 13.4 Z" fill="#f2f2f2" stroke="#000" stroke-width="1.4" stroke-linejoin="round"/><path d="M9.5 2 L9.5 4.5 L12 4.5" fill="none" stroke="#000" stroke-width="1.2"/></svg>
<div class="t" style="top:625px;font-size:12px;line-height:14px;font-weight:normal;color:#111;letter-spacing:0.143px;left:30.80px;">Добавить</div>
<div class="a" style="left:108px;top:595px;width:70px;height:46px;box-sizing:border-box;border:1px solid #707070;border-radius:3px;background:linear-gradient(#f2f2f2 0%,#ebebeb 50%,#dddddd 50%,#cfcfcf 100%);box-shadow:inset 0 0 0 1px rgba(255,255,255,0.7);"></div>
<svg class="a" style="left:137px;top:605px" width="13" height="13" viewBox="0 0 13 13"><path d="M1.8 1.8 L11.2 11.2 M11.2 1.8 L1.8 11.2" stroke="#6e0808" stroke-width="2.4" stroke-linecap="round"/></svg>
<div class="t" style="top:625px;font-size:12px;line-height:14px;font-weight:normal;color:#111;letter-spacing:0.350px;left:117.50px;">Удалить</div>
<div class="a" style="left:59px;top:641px;width:1px;height:14px;background:#606060;"></div>
<div class="a" style="left:53px;top:655px;width:13px;height:13px;box-sizing:border-box;border:1px solid #8f8f8f;background:linear-gradient(135deg,#d8d8d8,#f8f8f8);box-shadow:inset 0 0 0 1px #f4f4f4;"></div>
<div class="t" style="top:655px;font-size:12px;line-height:14px;font-weight:bold;color:#111;letter-spacing:0.125px;left:69.00px;">Аванс(18/118)</div>
<div class="t" style="top:595px;font-size:12px;line-height:14px;font-weight:bold;color:#111;letter-spacing:-0.390px;left:227.10px;">Итого сумма</div>
<div class="t" style="top:619px;font-size:12px;line-height:14px;font-weight:bold;color:#111;letter-spacing:-0.200px;left:236.40px;">Итого НДС</div>
<div class="t" style="top:643px;font-size:12px;line-height:14px;font-weight:bold;color:#111;letter-spacing:-0.175px;left:265.50px;">Итого</div>
<div class="a" style="left:309px;top:594px;width:144px;height:23px;background:#fff;border:1px solid #a6a6a6;box-sizing:border-box;"></div>
<div class="a" style="left:309px;top:618px;width:144px;height:23px;background:#fff;border:1px solid #a6a6a6;box-sizing:border-box;"></div>
<div class="a" style="left:309px;top:642px;width:144px;height:23px;background:#fff;border:1px solid #a6a6a6;box-sizing:border-box;"></div>
<div class="t" style="top:647px;font-size:12.5px;line-height:14px;font-weight:normal;color:#111;letter-spacing:0.300px;left:421.60px;">0,00</div>
<div class="a" style="left:454px;top:643px;width:82px;height:22px;box-sizing:border-box;border:1px solid #707070;border-radius:3px;background:linear-gradient(#f2f2f2 0%,#ebebeb 50%,#dddddd 50%,#cfcfcf 100%);box-shadow:inset 0 0 0 1px rgba(255,255,255,0.7);"></div>
<div class="t" style="top:647px;font-size:12px;line-height:14px;font-weight:normal;color:#111;letter-spacing:0.311px;left:461.20px;">Рассчитать</div>
<div class="t" style="top:595px;font-size:12px;line-height:14px;font-weight:bold;color:#111;letter-spacing:-0.164px;left:473.40px;">В т.ч. акциз</div>
<div class="a" style="left:551px;top:594px;width:94px;height:23px;background:#fff;border:1px solid #a6a6a6;box-sizing:border-box;"></div>
<div class="a" style="left:602px;top:609px;width:1px;height:1px;background:#222;box-shadow:0 0 0.6px #222;"></div>
<div class="a" style="left:672px;top:595px;width:107px;height:22px;box-sizing:border-box;border:1px solid #707070;border-radius:3px;background:linear-gradient(#f2f2f2 0%,#ebebeb 50%,#dddddd 50%,#cfcfcf 100%);box-shadow:inset 0 0 0 1px rgba(255,255,255,0.7);"></div>
<div class="t" style="top:599px;font-size:12px;line-height:14px;font-weight:bold;color:#111;letter-spacing:-0.133px;left:711.00px;">Счет</div>
<div class="a" style="left:672px;top:619px;width:107px;height:22px;box-sizing:border-box;border:1px solid #707070;border-radius:3px;background:linear-gradient(#f2f2f2 0%,#ebebeb 50%,#dddddd 50%,#cfcfcf 100%);box-shadow:inset 0 0 0 1px rgba(255,255,255,0.7);"></div>
<div class="t" style="top:623px;font-size:12px;line-height:14px;font-weight:bold;color:#111;letter-spacing:-0.200px;left:684.40px;">Счет-фактура</div>
<div class="a" style="left:672px;top:643px;width:107px;height:22px;box-sizing:border-box;border:1px solid #707070;border-radius:3px;background:linear-gradient(#f2f2f2 0%,#ebebeb 50%,#dddddd 50%,#cfcfcf 100%);box-shadow:inset 0 0 0 1px rgba(255,255,255,0.7);"></div>
<div class="t" style="top:647px;font-size:12px;line-height:14px;font-weight:bold;color:#111;letter-spacing:0.212px;left:691.50px;">Накладная</div>
<div class="a" style="left:779px;top:606px;width:13px;height:1px;background:#606060;"></div>
<div class="a" style="left:791px;top:606px;width:1px;height:49px;background:#606060;"></div>
<div class="a" style="left:779px;top:654px;width:13px;height:1px;background:#606060;"></div>
<div class="a" style="left:779px;top:630px;width:25px;height:1px;background:#606060;"></div>
<div class="a" style="left:803px;top:624px;width:13px;height:13px;box-sizing:border-box;border:1px solid #8f8f8f;background:linear-gradient(135deg,#e4e8ee,#fbfbfb);box-shadow:inset 0 0 0 1px #f4f4f4;"></div>
<svg class="a" style="left:803px;top:624px" width="13" height="13" viewBox="0 0 13 13"><path d="M3.5 6.8 L5.5 9.5 L9.5 3.2" fill="none" stroke="#4c5f80" stroke-width="1.8" stroke-linecap="round" stroke-linejoin="round"/></svg>
<div class="t" style="top:624px;font-size:12px;line-height:14px;font-weight:normal;color:#111;letter-spacing:0.357px;left:818.20px;">Просмотр</div>
<div class="a" style="left:912px;top:607px;width:82px;height:46px;box-sizing:border-box;border:1px solid #707070;border-radius:3px;background:linear-gradient(#f2f2f2 0%,#ebebeb 50%,#dddddd 50%,#cfcfcf 100%);box-shadow:inset 0 0 0 1px rgba(255,255,255,0.7);"></div>
<svg class="a" style="left:940px;top:612px" width="26" height="24" viewBox="0 0 26 24"><rect x="14" y="4" width="7" height="14" fill="#c4c4cc"/><rect x="7" y="5" width="6.5" height="9.5" fill="#fff"/><path d="M6.5 4.5 L13.5 4.5 L13.5 14.5 M5 14.5 L18 14.5" fill="none" stroke="#000" stroke-width="1.1"/><path d="M6.5 4.5 L10.5 8.5 L10.5 18.5 L6.5 14.5 Z" fill="#a0a038" stroke="#000" stroke-width="1.1"/><path d="M15 9.4 L18.5 6 L18.5 12.8 Z" fill="#000090"/><rect x="18" y="8" width="3" height="3" fill="#000090"/></svg>
<div class="t" style="top:637px;font-size:12px;line-height:14px;font-weight:bold;color:#111;letter-spacing:0.325px;left:931.40px;">Выход</div>
</div></body></html>
